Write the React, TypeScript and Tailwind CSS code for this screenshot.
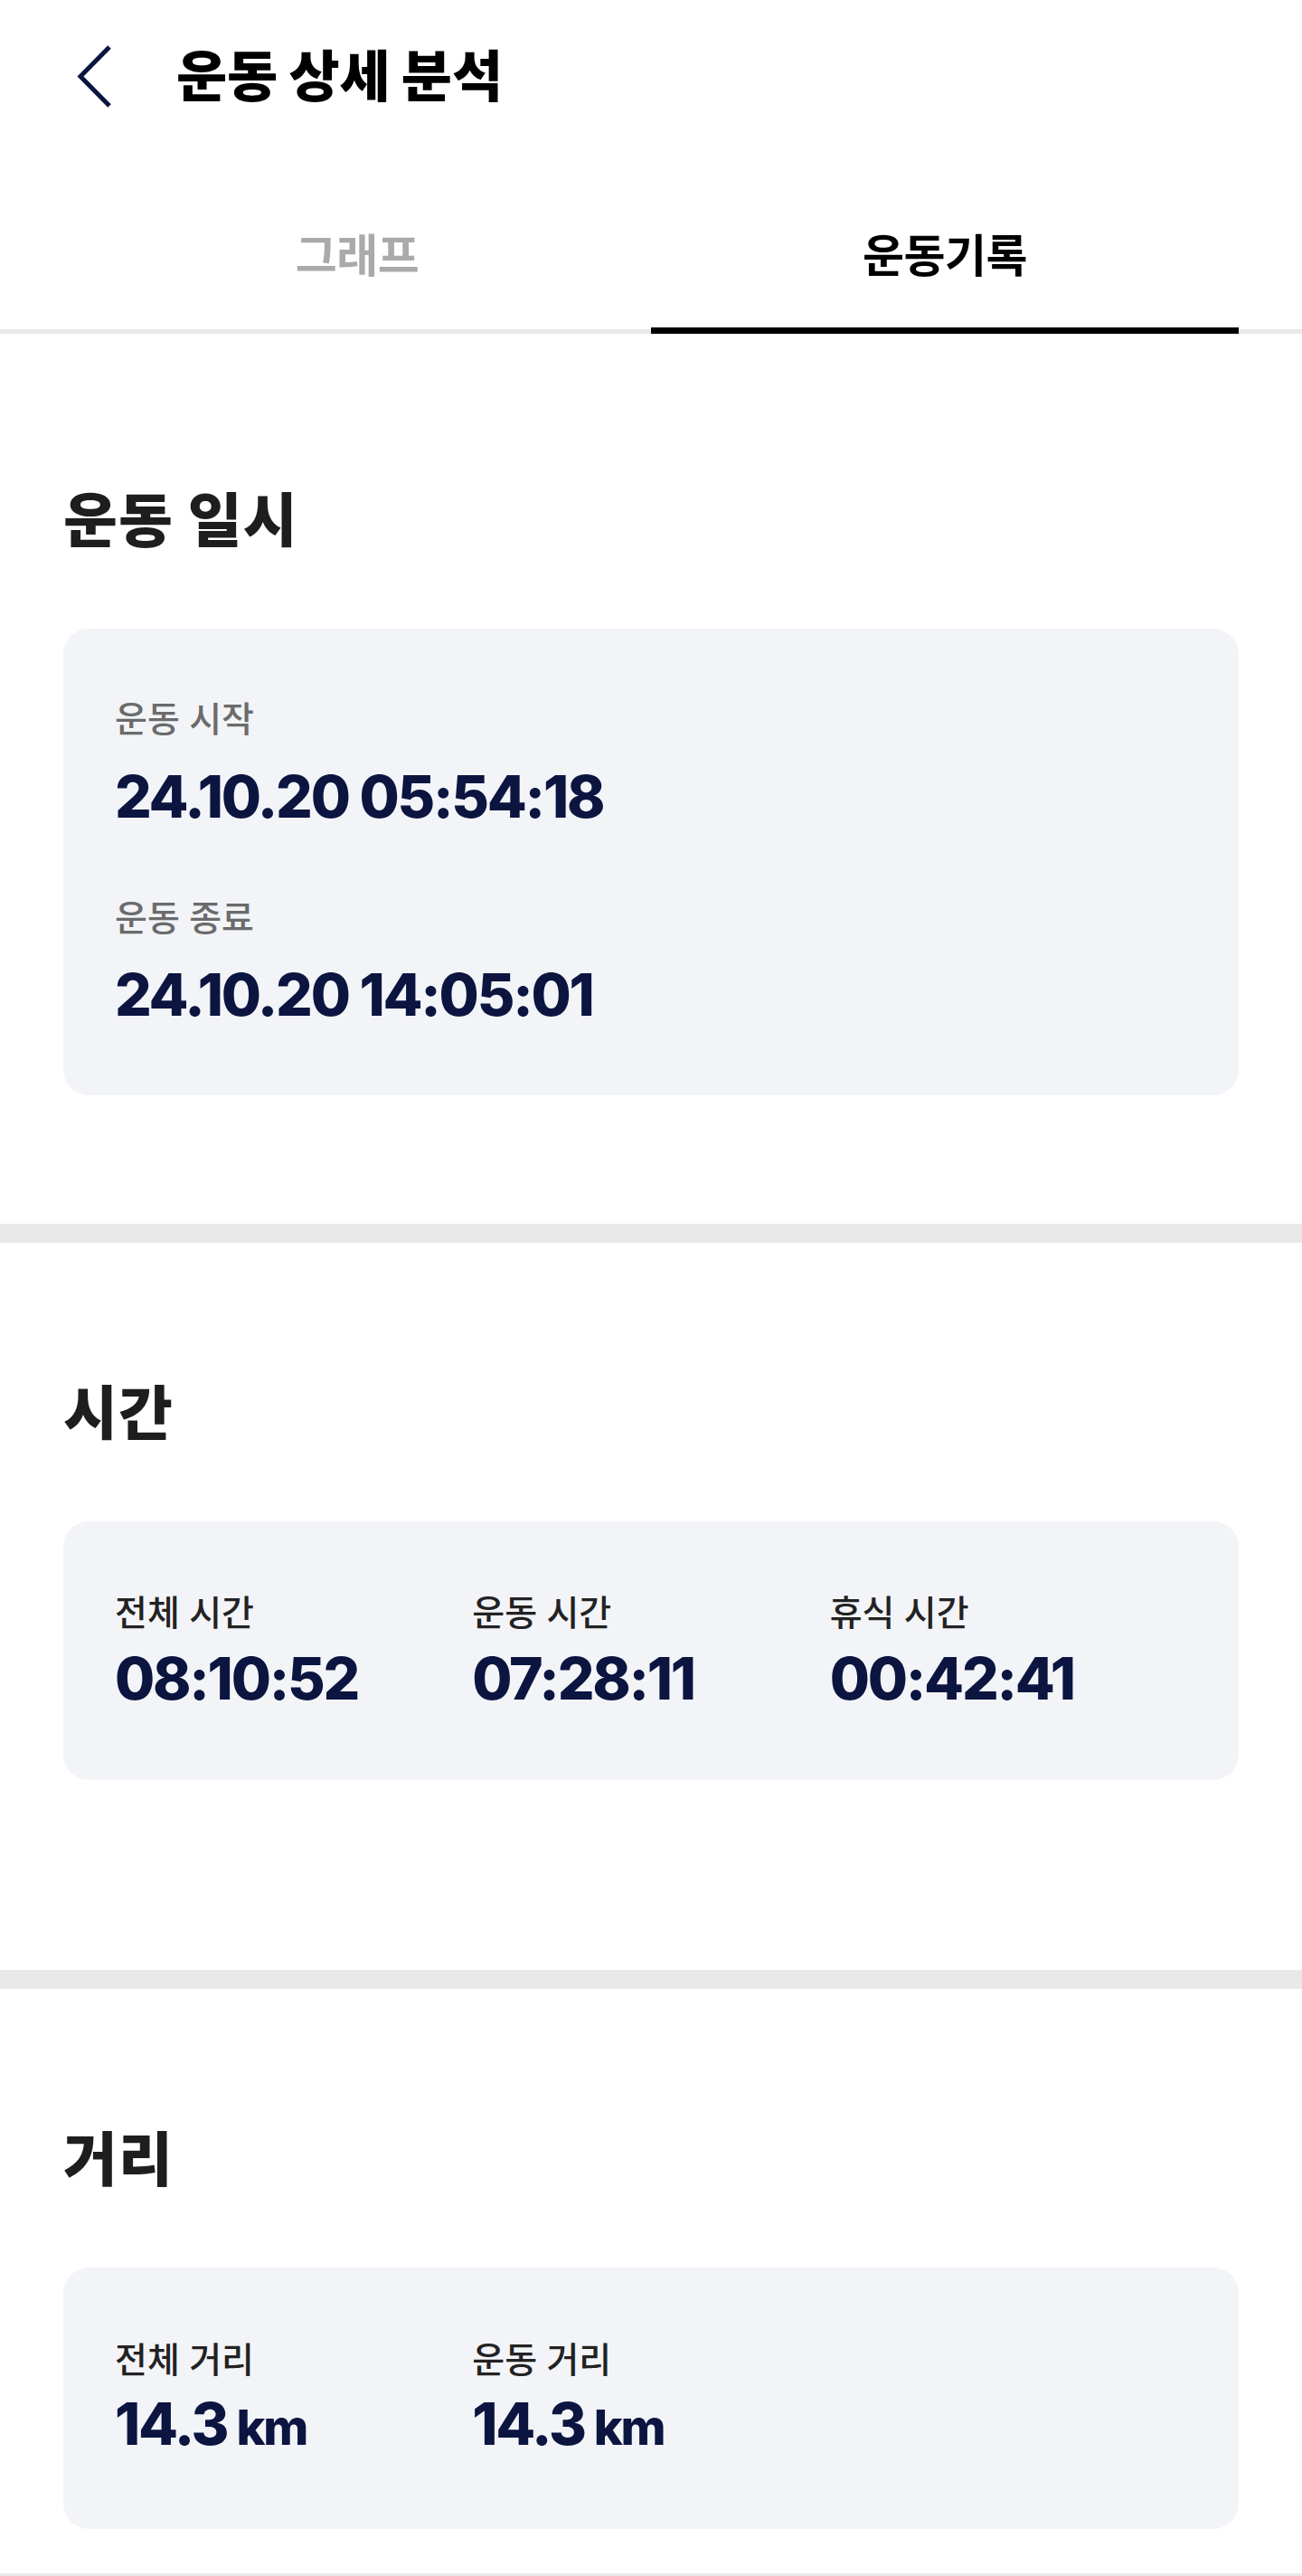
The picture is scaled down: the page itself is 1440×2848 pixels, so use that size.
import React from "react";

function Card({ children, className }: { children: React.ReactNode; className: string }) {
  return <div className={`rounded-[28px] bg-[#f3f4f8] px-[57px] ${className}`}>{children}</div>;
}

function Value({ children, className = "" }: { children: React.ReactNode; className?: string }) {
  return (
    <div className={`text-[64px] leading-none font-extrabold tracking-[-0.035em] text-[#0b1540] ${className}`}>{children}</div>
  );
}

function Km({ n }: { n: string }) {
  return (
    <div className="mt-[20px] flex items-baseline text-[64px] leading-none font-extrabold tracking-[-0.035em] text-[#0b1540]">
      <span>{n}</span>
      <span className="ml-[10px] text-[54px]">km</span>
    </div>
  );
}

export default function App() {
  return (
    <div className="w-[1440px] bg-white font-[Inter,'Noto_Sans_CJK_KR',sans-serif]">
      {/* Header */}
      <div className="flex h-[170px] items-center pl-[84px]">
        <svg width="44" height="72" viewBox="0 0 44 72" fill="none">
          <polyline points="37,3 5,35.5 37,68" stroke="#0b1540" strokeWidth="5" fill="none" />
        </svg>
        <h1 className="ml-[67px] text-[61px] leading-none font-black tracking-[0em] text-black">운동 상세 분석</h1>
      </div>

      {/* Tabs */}
      <div className="border-b-[5px] border-[#e9e9e9]">
        <div className="-mb-[5px] flex px-[70px]">
          <div className="flex h-[199px] flex-1 items-center justify-center border-b-[7px] border-transparent pt-[34px]">
            <span className="text-[50px] leading-none font-bold tracking-[-0.01em] text-[#aaaaaa]">그래프</span>
          </div>
          <div className="flex h-[199px] flex-1 items-center justify-center border-b-[7px] border-black pt-[34px]">
            <span className="text-[50px] leading-none font-bold tracking-[-0.01em] text-black">운동기록</span>
          </div>
        </div>
      </div>

      {/* Section 1 */}
      <section className="px-[70px] pt-[174px] pb-[142px]">
        <h2 className="text-[65px] leading-none font-extrabold tracking-[0.02em] text-[#1e1e1e]">운동 일시</h2>
        <Card className="mt-[87px] pt-[80px] pb-[79px]">
          <div className="text-[39px] leading-none font-medium tracking-[0em] text-[#6b6b6b]">운동 시작</div>
          <Value className="mt-[35px]">24.10.20 05:54:18</Value>
          <div className="mt-[82px] text-[39px] leading-none font-medium tracking-[0em] text-[#6b6b6b]">운동 종료</div>
          <Value className="mt-[34px]">24.10.20 14:05:01</Value>
        </Card>
      </section>

      <div className="h-[21px] bg-[#e9e9e9]" />

      {/* Section 2 */}
      <section className="px-[70px] pt-[156px] pb-[210px]">
        <h2 className="text-[65px] leading-none font-extrabold tracking-[0.02em] text-[#1e1e1e]">시간</h2>
        <Card className="mt-[87px] pt-[81px] pb-[80px]">
          <div className="grid grid-cols-3">
            {[
              ["전체 시간", "08:10:52"],
              ["운동 시간", "07:28:11"],
              ["휴식 시간", "00:42:41"],
            ].map(([l, v]) => (
              <div key={l}>
                <div className="text-[39px] leading-none font-medium tracking-[0em] text-[#222222]">{l}</div>
                <Value className="mt-[22px]">{v}</Value>
              </div>
            ))}
          </div>
        </Card>
      </section>

      <div className="h-[21px] bg-[#e9e9e9]" />

      {/* Section 3 */}
      <section className="px-[70px] pt-[156px] pb-[49px]">
        <h2 className="text-[65px] leading-none font-extrabold tracking-[0.02em] text-[#1e1e1e]">거리</h2>
        <Card className="mt-[87px] pt-[82px] pb-[84px]">
          <div className="grid grid-cols-3">
            {[
              ["전체 거리", "14.3"],
              ["운동 거리", "14.3"],
            ].map(([l, v]) => (
              <div key={l}>
                <div className="text-[39px] leading-none font-medium tracking-[0em] text-[#222222]">{l}</div>
                <Km n={v} />
              </div>
            ))}
          </div>
        </Card>
      </section>

      <div className="h-[21px] bg-[#e9e9e9]" />
    </div>
  );
}
